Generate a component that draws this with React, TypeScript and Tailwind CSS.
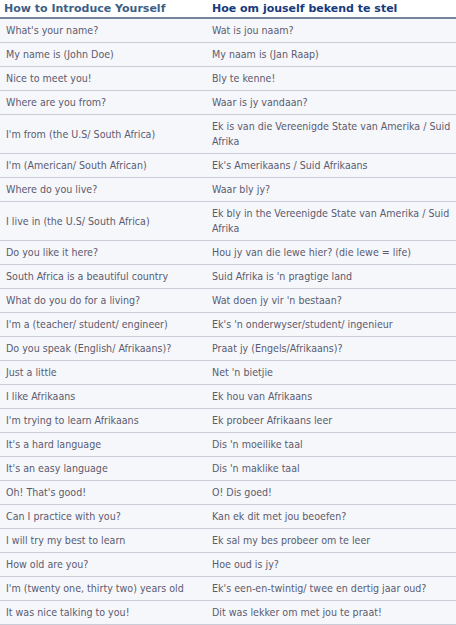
const rows: [string, string][] = [
  ["What's your name?", 'Wat is jou naam?'],
  ['My name is (John Doe)', 'My naam is (Jan Raap)'],
  ['Nice to meet you!', 'Bly te kenne!'],
  ['Where are you from?', 'Waar is jy vandaan?'],
  ["I'm from (the U.S/ South Africa)", 'Ek is van die Vereenigde State van Amerika / Suid Afrika'],
  ["I'm (American/ South African)", "Ek's Amerikaans / Suid Afrikaans"],
  ['Where do you live?', 'Waar bly jy?'],
  ['I live in (the U.S/ South Africa)', 'Ek bly in the Vereenigde State van Amerika / Suid Afrika'],
  ['Do you like it here?', 'Hou jy van die lewe hier? (die lewe = life)'],
  ['South Africa is a beautiful country', "Suid Afrika is 'n pragtige land"],
  ['What do you do for a living?', "Wat doen jy vir 'n bestaan?"],
  ["I'm a (teacher/ student/ engineer)", "Ek's 'n onderwyser/student/ ingenieur"],
  ['Do you speak (English/ Afrikaans)?', 'Praat jy (Engels/Afrikaans)?'],
  ['Just a little', "Net 'n bietjie"],
  ['I like Afrikaans', 'Ek hou van Afrikaans'],
  ["I'm trying to learn Afrikaans", 'Ek probeer Afrikaans leer'],
  ["It's a hard language", "Dis 'n moeilike taal"],
  ["It's an easy language", "Dis 'n maklike taal"],
  ["Oh! That's good!", 'O! Dis goed!'],
  ['Can I practice with you?', 'Kan ek dit met jou beoefen?'],
  ['I will try my best to learn', 'Ek sal my bes probeer om te leer'],
  ['How old are you?', 'Hoe oud is jy?'],
  ["I'm (twenty one, thirty two) years old", "Ek's een-en-twintig/ twee en dertig jaar oud?"],
  ['It was nice talking to you!', 'Dit was lekker om met jou te praat!'],
]

export default function App() {
  return (
    <div className="w-[456px] h-[625px] overflow-hidden bg-white font-['DejaVu_Sans_Condensed','DejaVu_Sans',sans-serif]">
      <table className="w-full border-collapse table-fixed">
        <thead>
          <tr className="border-b-2 border-[#76869a] bg-white">
            <th className="w-[206px] px-[4px] h-[18px] text-left text-[11px] leading-[15px] font-bold font-['DejaVu_Sans',sans-serif] text-[#3e5f86]">
              How to Introduce Yourself
            </th>
            <th className="pl-[6px] pr-[2px] text-left text-[11px] leading-[15px] font-bold font-['DejaVu_Sans',sans-serif] text-[#183a7c]">
              Hoe om jouself bekend te stel
            </th>
          </tr>
        </thead>
        <tbody>
          {rows.map(([en, af]) => (
            <tr key={en} className="border-b border-[#c8cdd7] bg-[#f6f7fb]">
              <td className="px-[6px] py-[4px] text-[10.6px] leading-[15px] text-[#5b5b6f] align-middle">{en}</td>
              <td className="pl-[6px] pr-[2px] py-[4px] text-[10.6px] leading-[15px] text-[#5b5b6f] align-middle">{af}</td>
            </tr>
          ))}
        </tbody>
      </table>
    </div>
  )
}
